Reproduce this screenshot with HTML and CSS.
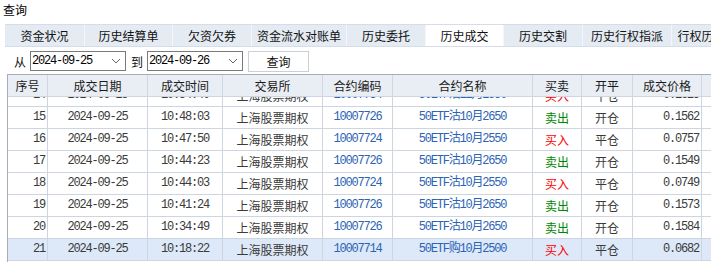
FILE: index.html
```
<!DOCTYPE html>
<html lang="zh-CN">
  <head>
    <meta charset="UTF-8" />
    <title>查询</title>
    <link rel="stylesheet" href="styles.css">
  </head>
  <body>
    <div class="title">查询</div>

    <div class="tabs">
      <div class="tab">资金状况</div>
      <div class="tab">历史结算单</div>
      <div class="tab">欠资欠券</div>
      <div class="tab">资金流水对账单</div>
      <div class="tab">历史委托</div>
      <div class="tab active">历史成交</div>
      <div class="tab">历史交割</div>
      <div class="tab">历史行权指派</div>
      <div class="tab">行权历史</div>
    </div>

    <div class="filter">
      <span class="label">从</span>
      <div class="date">
        <span>2024-09-25</span>
        <svg width="10" height="6" viewBox="0 0 10 6"><polyline points="1,1 5,5 9,1" fill="none" stroke="#666" stroke-width="1"/></svg>
      </div>
      <span class="label">到</span>
      <div class="date">
        <span>2024-09-26</span>
        <svg width="10" height="6" viewBox="0 0 10 6"><polyline points="1,1 5,5 9,1" fill="none" stroke="#666" stroke-width="1"/></svg>
      </div>
      <button class="query-btn">查询</button>
    </div>

    <div class="grid">
      <div class="row head">
        <div>序号</div>
        <div>成交日期</div>
        <div>成交时间</div>
        <div>交易所</div>
        <div>合约编码</div>
        <div>合约名称</div>
        <div>买卖</div>
        <div>开平</div>
        <div>成交价格</div>
        <div></div>
      </div>
      <div class="body">
        <div class="row first">
          <div class="num r">14</div><div class="num">2024-09-25</div><div class="num">10:54:40</div><div>上海股票期权</div>
          <div class="num blue">10007734</div><div class="num blue">50ETF沽12月2550</div><div class="buy">买入</div><div>平仓</div><div class="num r">0.1625</div><div></div>
        </div>
        <div class="row">
          <div class="num r">15</div><div class="num">2024-09-25</div><div class="num">10:48:03</div><div>上海股票期权</div>
          <div class="num blue">10007726</div><div class="num blue">50ETF沽10月2650</div><div class="sell">卖出</div><div>开仓</div><div class="num r">0.1562</div><div></div>
        </div>
        <div class="row">
          <div class="num r">16</div><div class="num">2024-09-25</div><div class="num">10:47:50</div><div>上海股票期权</div>
          <div class="num blue">10007724</div><div class="num blue">50ETF沽10月2550</div><div class="buy">买入</div><div>平仓</div><div class="num r">0.0757</div><div></div>
        </div>
        <div class="row">
          <div class="num r">17</div><div class="num">2024-09-25</div><div class="num">10:44:23</div><div>上海股票期权</div>
          <div class="num blue">10007726</div><div class="num blue">50ETF沽10月2650</div><div class="sell">卖出</div><div>开仓</div><div class="num r">0.1549</div><div></div>
        </div>
        <div class="row">
          <div class="num r">18</div><div class="num">2024-09-25</div><div class="num">10:44:03</div><div>上海股票期权</div>
          <div class="num blue">10007724</div><div class="num blue">50ETF沽10月2550</div><div class="buy">买入</div><div>平仓</div><div class="num r">0.0749</div><div></div>
        </div>
        <div class="row">
          <div class="num r">19</div><div class="num">2024-09-25</div><div class="num">10:41:24</div><div>上海股票期权</div>
          <div class="num blue">10007726</div><div class="num blue">50ETF沽10月2650</div><div class="sell">卖出</div><div>开仓</div><div class="num r">0.1573</div><div></div>
        </div>
        <div class="row">
          <div class="num r">20</div><div class="num">2024-09-25</div><div class="num">10:34:49</div><div>上海股票期权</div>
          <div class="num blue">10007726</div><div class="num blue">50ETF沽10月2650</div><div class="sell">卖出</div><div>开仓</div><div class="num r">0.1584</div><div></div>
        </div>
        <div class="row selected">
          <div class="num r">21</div><div class="num">2024-09-25</div><div class="num">10:18:22</div><div>上海股票期权</div>
          <div class="num blue">10007714</div><div class="num blue">50ETF购10月2500</div><div class="buy">买入</div><div>平仓</div><div class="num r">0.0682</div><div></div>
        </div>
      </div>
    </div>
  </body>
</html>
```

FILE: styles.css
```
body {
  margin: 0;
  font-family: "Noto Sans CJK SC", sans-serif;
  font-size: 12px;
  color: #222;
  background: #fff;
  overflow: hidden;
}

.title {
  height: 19px;
  line-height: 19px;
  padding-left: 3px;
  margin-bottom: 5px;
  color: #000;
}

.tabs {
  display: grid;
  grid-template-columns: 80px 88px 79px 95px 79px 78px 79px 89px 60px;
  margin-left: 5px;
  height: 21px;
  border-top: 1px solid #d6dde8;
  border-bottom: 1px solid #d6dde8;
  background: #e5ebf3;
  overflow: hidden;
}
.tab {
  line-height: 21px;
  text-align: center;
  white-space: nowrap;
  border-right: 1px solid #f4f6fa;
  color: #111;
}
.tab.active {
  background: #fff;
}

.filter {
  display: flex;
  align-items: center;
  height: 22px;
  margin-top: 3px;
  padding-left: 14px;
}
.label {
  width: 16px;
  color: #111;
}
.date {
  display: flex;
  align-items: center;
  justify-content: space-between;
  box-sizing: border-box;
  width: 96px;
  height: 20px;
  border: 1px solid #7a7a7a;
  padding: 0 4px 0 1px;
  margin-right: 5px;
  font-family: "Liberation Mono", "Noto Sans CJK SC", monospace;
  font-size: 12px;
  letter-spacing: -1.2px;
  color: #000;
}
.query-btn {
  width: 61px;
  height: 21px;
  border: 1px solid #c9d0db;
  background: #fff;
  font-family: "Noto Sans CJK SC", sans-serif;
  font-size: 12px;
  color: #111;
  padding: 0;
}

.grid {
  margin-top: 2px;
  margin-left: 7px;
  border-top: 1px solid #a8adb5;
  border-left: 1px solid #a8adb5;
}
.row {
  display: grid;
  grid-template-columns: 40px 100px 75px 100px 70px 140px 49px 51px 69px 1fr;
  height: 22px;
}
.row > div {
  box-sizing: border-box;
  border-right: 1px solid #cdd5e0;
  border-bottom: 1px solid #cdd5e0;
  line-height: 21px;
  text-align: center;
  white-space: nowrap;
  overflow: hidden;
  color: #3a3a3a;
}
.row > div:last-child {
  border-right: none;
}
.head > div {
  background: #e9eef5;
  color: #1a1a1a;
  border-right-color: #cfd7e2;
}
.body {
  height: 165px;
  overflow: hidden;
}
.row.first {
  margin-top: -12px;
}
.row.selected > div {
  background: #dde9f8;
}
.num {
  font-family: "Liberation Mono", "Noto Sans CJK SC", monospace;
  letter-spacing: -1.2px;
}
.row > .r {
  text-align: right;
  padding-right: 2px;
}
.row > .blue {
  color: #2b63b5;
}
.row > .buy {
  color: #f00;
}
.row > .sell {
  color: #080;
}
```
